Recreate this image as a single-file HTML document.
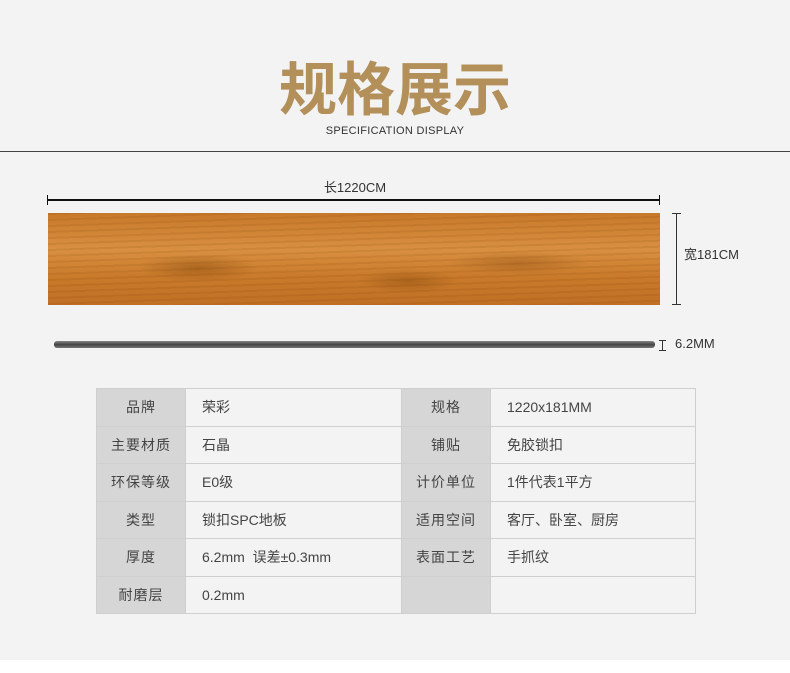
<!DOCTYPE html>
<html><head><meta charset="utf-8"><style>
body{margin:0;width:790px;height:673px;background:#fff;font-family:"Liberation Sans","Noto Sans CJK SC",sans-serif;position:relative;overflow:hidden}
.bg{position:absolute;left:0;top:0;width:790px;height:660px;background:#f3f3f3}
.a{position:absolute}
table{position:absolute;left:96px;top:388px;border-collapse:collapse;width:600px;font-size:14px;color:#444}
td{border:1.5px solid #cfcfcf;height:36.5px;padding:0}
td.l{background:#d6d6d6;text-align:center;width:88px;letter-spacing:1px}
td.v{background:#f3f3f3;padding-left:16px}
</style></head><body>
<div class="bg"></div>
<div class="a" style="left:0;width:790px;top:50px;text-align:center;font-size:58px;font-weight:bold;color:#b3905a;line-height:70px;font-family:'Noto Sans CJK SC',sans-serif">规格展示</div>
<div class="a" style="left:0;width:790px;top:125px;text-align:center;font-size:11px;color:#333;letter-spacing:0.3px">SPECIFICATION DISPLAY</div>
<div class="a" style="left:0;top:151px;width:790px;height:1px;background:#444"></div>
<div class="a" style="left:300px;width:110px;top:177px;text-align:center;font-size:13px;color:#333">长1220CM</div>
<div class="a" style="left:48px;top:199px;width:612px;height:2px;background:#111"></div>
<div class="a" style="left:47px;top:195px;width:1px;height:10px;background:#111"></div>
<div class="a" style="left:659px;top:195px;width:1px;height:10px;background:#111"></div>
<div class="a" style="left:48px;top:213px;width:612px;height:92px;background:
repeating-linear-gradient(178deg,rgba(120,60,0,0.12) 0 2px,transparent 2px 6px),
radial-gradient(ellipse 60px 14px at 150px 55px,rgba(130,70,10,.45),transparent),
radial-gradient(ellipse 50px 12px at 360px 68px,rgba(130,70,10,.4),transparent),
radial-gradient(ellipse 70px 12px at 470px 50px,rgba(120,60,10,.3),transparent),
linear-gradient(180deg,#c8792a,#d89040 40%,#c97a2a 70%,#c07025)"></div>
<div class="a" style="left:676px;top:213px;width:1px;height:92px;background:#333"></div>
<div class="a" style="left:672px;top:213px;width:9px;height:1px;background:#333"></div>
<div class="a" style="left:672px;top:304px;width:9px;height:1px;background:#333"></div>
<div class="a" style="left:684px;top:244px;font-size:13px;color:#333">宽181CM</div>
<div class="a" style="left:54px;top:341px;width:601px;height:7px;background:linear-gradient(#888,#444 50%,#777);border-radius:3px"></div>
<div class="a" style="left:662px;top:340px;width:1px;height:10px;background:#333"></div>
<div class="a" style="left:659px;top:340px;width:7px;height:1px;background:#333"></div>
<div class="a" style="left:659px;top:350px;width:7px;height:1px;background:#333"></div>
<div class="a" style="left:675px;top:336px;font-size:13px;color:#333">6.2MM</div>
<table>
<tr><td class="l">品牌</td><td class="v" style="width:199px">荣彩</td><td class="l">规格</td><td class="v">1220x181MM</td></tr>
<tr><td class="l">主要材质</td><td class="v">石晶</td><td class="l">铺贴</td><td class="v">免胶锁扣</td></tr>
<tr><td class="l">环保等级</td><td class="v">E0级</td><td class="l">计价单位</td><td class="v">1件代表1平方</td></tr>
<tr><td class="l">类型</td><td class="v">锁扣SPC地板</td><td class="l">适用空间</td><td class="v">客厅、卧室、厨房</td></tr>
<tr><td class="l">厚度</td><td class="v">6.2mm&nbsp; 误差±0.3mm</td><td class="l">表面工艺</td><td class="v">手抓纹</td></tr>
<tr><td class="l">耐磨层</td><td class="v">0.2mm</td><td class="l"></td><td class="v"></td></tr>
</table>
</body></html>
